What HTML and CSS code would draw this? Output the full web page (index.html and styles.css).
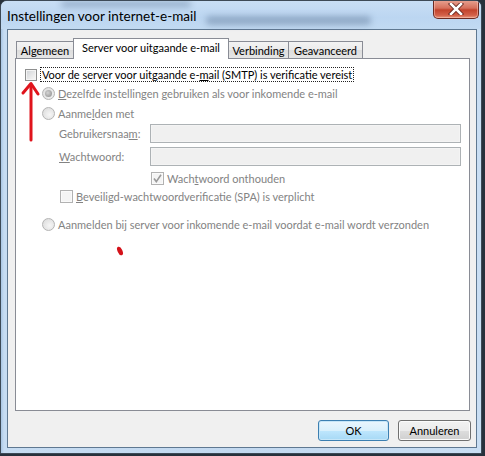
FILE: index.html
```html
<!DOCTYPE html>
<html>
<head>
  <meta charset="utf-8">
  <link rel="stylesheet" href="styles.css">
</head>
<body>
  <div class="window">
    <!-- title bar, glass with blurred stuff behind it -->
    <div class="titlebar">
      <div class="glass-blur blur-a"></div>
      <div class="glass-blur blur-b"></div>
      <span class="title">Instellingen voor internet-e-mail</span>
      <div class="close">
        <svg width="16" height="12" viewBox="0 0 16 12">
          <path d="M3 1 L13 11 M13 1 L3 11" stroke="#5a1d16" stroke-width="4.2" stroke-linecap="square"/>
          <path d="M3 1 L13 11 M13 1 L3 11" stroke="#ffffff" stroke-width="2.6" stroke-linecap="square"/>
        </svg>
      </div>
    </div>

    <div class="client">
      <div class="tabs">
        <div class="tab tab-1">Algemeen</div>
        <div class="tab tab-2 active">Server voor uitgaande e-mail</div>
        <div class="tab tab-3">Verbinding</div>
        <div class="tab tab-4">Geavanceerd</div>
      </div>

      <div class="panel">
        <div class="row row-auth">
          <span class="check"></span>
          <span class="focus">Voor de server voor uitgaande e-<u>m</u>ail (SMTP) is verificatie vereist</span>
        </div>
        <div class="row row-same off">
          <span class="radio checked"></span>
          <span><u>D</u>ezelfde instellingen gebruiken als voor inkomende e-mail</span>
        </div>
        <div class="row row-login off">
          <span class="radio"></span>
          <span>Aanme<u>l</u>den met</span>
        </div>
        <div class="row row-user off">
          <span class="label">Gebruikersnaa<u>m</u>:</span>
          <span class="input"></span>
        </div>
        <div class="row row-pass off">
          <span class="label"><u>W</u>achtwoord:</span>
          <span class="input"></span>
        </div>
        <div class="row row-remember off">
          <span class="check off-check ticked">
            <svg width="11" height="11" viewBox="0 0 11 11"><path d="M2 5.5 L4.3 8.6 L9 1.8" fill="none" stroke="#9a9a9a" stroke-width="1.6"/></svg>
          </span>
          <span>Wach<u>t</u>woord onthouden</span>
        </div>
        <div class="row row-spa off">
          <span class="check off-check"></span>
          <span><u>B</u>eveiligd-wachtwoordverificatie (SPA) is verplicht</span>
        </div>
        <div class="row row-before off">
          <span class="radio"></span>
          <span>Aanmelden bij server voor inkomende e-mail voordat e-mail wordt verzonden</span>
        </div>
      </div>

      <div class="buttons">
        <button class="btn default">OK</button>
        <button class="btn">Annuleren</button>
      </div>
    </div>
  </div>

  <!-- red pen marks drawn on the screenshot -->
  <svg class="marks" width="485" height="456" viewBox="0 0 485 456">
    <path d="M31 140 L31 86" stroke="#e0141c" stroke-width="3" stroke-linecap="round" fill="none"/>
    <path d="M23 93 L31 83.5 L38 94" stroke="#e0141c" stroke-width="3" stroke-linecap="round" stroke-linejoin="round" fill="none"/>
    <ellipse cx="120" cy="251" rx="2.4" ry="4.6" transform="rotate(-25 120 251)" fill="#d4121a"/>
  </svg>
</body>
</html>
```

FILE: styles.css
```css
* { box-sizing: border-box; }
body {
  margin: 0;
  background: #27313c;
  font-family: Lato, "Liberation Sans", sans-serif;
  font-size: 11px;
  color: #000;
  width: 485px;
  height: 456px;
  overflow: hidden;
  position: relative;
}

.window {
  width: 482px;
  height: 454px;
  display: flex;
  flex-direction: column;
  border: 1px solid #3d4a57;
  border-radius: 7px 7px 0 0;
  background: linear-gradient(90deg, #a9c6e4 0px, #c6dcf2 3px, #c3d9f0 50%, #c9def3 100%);
  overflow: hidden;
}

/* title bar */
.titlebar {
  height: 28px;
  display: flex;
  align-items: flex-start;
  justify-content: space-between;
  position: relative;
  background: linear-gradient(180deg, #c8def5 0%, #bcd6f1 60%, #c2daf2 100%);
}
.glass-blur {
  position: absolute;
  background: rgba(60, 85, 120, 0.35);
  filter: blur(3px);
  border-radius: 4px;
}
.blur-a { left: 60px; top: 0; width: 130px; height: 6px; }
.blur-b { left: 205px; top: 15px; width: 165px; height: 9px; }
.title {
  position: relative;
  padding: 7px 0 0 6px;
  font-size: 13.5px;
  color: #000;
}
.close {
  position: relative;
  width: 46px;
  height: 19px;
  margin: -1px 2px 0 0;
  border: 1px solid #6b2a22;
  border-top: none;
  border-radius: 0 0 5px 5px;
  background: linear-gradient(180deg, #e8a493 0%, #d6705c 45%, #c2432c 55%, #d3614a 85%, #e69b80 100%);
  box-shadow: inset 0 0 0 1px rgba(255, 200, 185, 0.5);
  display: flex;
  align-items: center;
  justify-content: center;
}

/* client area */
.client {
  flex: 1;
  margin: 0 4px 5px 6px;
  border: 1px solid #5f7891;
  background: #f0f0f0;
  padding: 7px 5px 0 7px;
  display: flex;
  flex-direction: column;
}

.tabs {
  display: flex;
  align-items: flex-end;
  padding-left: 1px;
  height: 21px;
  position: relative;
  z-index: 1;
}
.tab {
  height: 17px;
  border: 1px solid #898c95;
  border-bottom: none;
  margin-right: -1px;
  background: linear-gradient(180deg, #f3f3f3 0%, #ebebeb 50%, #dddddd 51%, #e5e5e5 100%);
  display: flex;
  align-items: center;
  justify-content: center;
  padding-top: 1px;
  white-space: nowrap;
}
.tab-1 { width: 58px; }
.tab-2 { width: 156px; }
.tab-3 { width: 61px; }
.tab-4 { width: 75px; }
.tab.active {
  height: 21px;
  margin-bottom: -1px;
  background: #ffffff;
  padding-top: 0;
  padding-bottom: 3px;
}

.panel {
  height: 353px;
  border: 1px solid #898c95;
  background: #ffffff;
  margin-right: 1px;
  padding: 8px 0 0 9px;
}

.row {
  display: flex;
  align-items: center;
  white-space: nowrap;
}
.off { color: #838383; }

.row-auth { height: 15px; }
.row-same { height: 20px; margin-top: 1px; padding-left: 17px; }
.row-login { height: 20px; padding-left: 17px; }
.row-user { height: 19px; margin-top: 1px; padding-left: 34px; }
.row-pass { height: 19px; margin-top: 4px; padding-left: 34px; }
.row-remember { height: 18px; margin-top: 3px; padding-left: 126px; }
.row-spa { height: 19px; padding-left: 35px; }
.row-before { height: 20px; margin-top: 8px; padding-left: 17px; }

.focus {
  margin-left: 2px;
  padding: 0 1px 0 1px;
  line-height: 13px;
  outline: 1px dotted #222;
}

.check {
  width: 12px;
  height: 12px;
  flex: none;
  border: 1px solid #8e8f8f;
  background: linear-gradient(135deg, #cfd2d6 0%, #eeeeee 70%, #f8f8f8 100%);
  box-shadow: inset 0 0 0 1px #f4f4f4;
  margin-right: 2px;
  display: flex;
  align-items: center;
  justify-content: center;
}
.off-check {
  width: 13px;
  height: 13px;
  border-color: #b2b2b2;
  background: #f4f4f4;
  box-shadow: inset 0 0 0 1px #fafafa;
  margin-right: 3px;
}

.radio {
  width: 13px;
  height: 13px;
  flex: none;
  border-radius: 50%;
  border: 1px solid #b4b4b4;
  background: radial-gradient(circle at 60% 60%, #f6f6f6 0%, #e4e4e4 60%, #d8d8d8 100%);
  margin-right: 3px;
  position: relative;
}
.radio.checked::after {
  content: "";
  position: absolute;
  left: 2px;
  top: 2px;
  width: 7px;
  height: 7px;
  border-radius: 50%;
  background: radial-gradient(circle at 40% 40%, #d4d4d4 0%, #a7a7a7 60%, #8e8e8e 100%);
}

.label { width: 91px; }
.input {
  width: 311px;
  height: 19px;
  border: 1px solid #adb2b5;
  background: #f0f0f0;
  box-shadow: inset 0 0 0 1px #f4f4f4;
}

.buttons {
  display: flex;
  justify-content: flex-end;
  gap: 9px;
  margin-top: 9px;
}
.btn {
  height: 21px;
  font-family: inherit;
  font-size: 11px;
  color: #000;
  border: 1px solid #707070;
  border-radius: 3px;
  background: linear-gradient(180deg, #f2f2f2 0%, #ebebeb 50%, #dddddd 51%, #cfcfcf 100%);
  box-shadow: inset 0 0 0 1px #fbfbfb;
  padding: 0;
}
.btn { width: 73px; }
.btn.default {
  width: 71px;
  border-color: #3c7fb1;
  background: linear-gradient(180deg, #eaf6fd 0%, #d9f0fc 50%, #bee6fd 51%, #a7d9f5 100%);
  box-shadow: inset 0 0 0 1px #c6e6f8;
}

.marks {
  position: absolute;
  left: 0;
  top: 0;
  pointer-events: none;
}
```
